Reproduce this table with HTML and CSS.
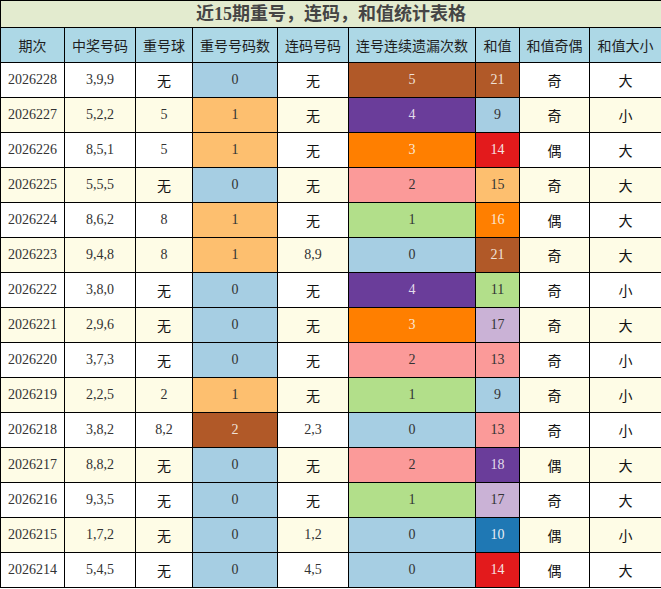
FILE: index.html
```html
<!DOCTYPE html>
<html lang="zh">
<head>
<meta charset="utf-8">
<title>近15期重号，连码，和值统计表格</title>
<link rel="stylesheet" href="styles.css">
</head>
<body>
<table class="stat">
  <colgroup>
    <col class="c1"><col class="c2"><col class="c3"><col class="c4"><col class="c5"><col class="c6"><col class="c7"><col class="c8"><col class="c9">
  </colgroup>
  <thead>
    <tr class="title-row"><th colspan="9" class="title">近15期重号，连码，和值统计表格</th></tr>
    <tr class="head-row">
      <th>期次</th><th>中奖号码</th><th>重号球</th><th>重号号码数</th><th>连码号码</th><th>连号连续遗漏次数</th><th>和值</th><th>和值奇偶</th><th>和值大小</th>
    </tr>
  </thead>
  <tbody>
    <tr><td class="n">2026228</td><td class="n">3,9,9</td><td class="z">无</td><td class="n p0">0</td><td class="z">无</td><td class="n p11">5</td><td class="n p11">21</td><td class="z">奇</td><td class="z">大</td></tr>
    <tr class="alt"><td class="n">2026227</td><td class="n">5,2,2</td><td class="n">5</td><td class="n p6">1</td><td class="z">无</td><td class="n p9">4</td><td class="n p0">9</td><td class="z">奇</td><td class="z">小</td></tr>
    <tr><td class="n">2026226</td><td class="n">8,5,1</td><td class="n">5</td><td class="n p6">1</td><td class="z">无</td><td class="n p7">3</td><td class="n p5">14</td><td class="z">偶</td><td class="z">大</td></tr>
    <tr class="alt"><td class="n">2026225</td><td class="n">5,5,5</td><td class="z">无</td><td class="n p0">0</td><td class="z">无</td><td class="n p4">2</td><td class="n p6">15</td><td class="z">奇</td><td class="z">大</td></tr>
    <tr><td class="n">2026224</td><td class="n">8,6,2</td><td class="n">8</td><td class="n p6">1</td><td class="z">无</td><td class="n p2">1</td><td class="n p7">16</td><td class="z">偶</td><td class="z">大</td></tr>
    <tr class="alt"><td class="n">2026223</td><td class="n">9,4,8</td><td class="n">8</td><td class="n p6">1</td><td class="n">8,9</td><td class="n p0">0</td><td class="n p11">21</td><td class="z">奇</td><td class="z">大</td></tr>
    <tr><td class="n">2026222</td><td class="n">3,8,0</td><td class="z">无</td><td class="n p0">0</td><td class="z">无</td><td class="n p9">4</td><td class="n p2">11</td><td class="z">奇</td><td class="z">小</td></tr>
    <tr class="alt"><td class="n">2026221</td><td class="n">2,9,6</td><td class="z">无</td><td class="n p0">0</td><td class="z">无</td><td class="n p7">3</td><td class="n p8">17</td><td class="z">奇</td><td class="z">大</td></tr>
    <tr><td class="n">2026220</td><td class="n">3,7,3</td><td class="z">无</td><td class="n p0">0</td><td class="z">无</td><td class="n p4">2</td><td class="n p4">13</td><td class="z">奇</td><td class="z">小</td></tr>
    <tr class="alt"><td class="n">2026219</td><td class="n">2,2,5</td><td class="n">2</td><td class="n p6">1</td><td class="z">无</td><td class="n p2">1</td><td class="n p0">9</td><td class="z">奇</td><td class="z">小</td></tr>
    <tr><td class="n">2026218</td><td class="n">3,8,2</td><td class="n">8,2</td><td class="n p11">2</td><td class="n">2,3</td><td class="n p0">0</td><td class="n p4">13</td><td class="z">奇</td><td class="z">小</td></tr>
    <tr class="alt"><td class="n">2026217</td><td class="n">8,8,2</td><td class="z">无</td><td class="n p0">0</td><td class="z">无</td><td class="n p4">2</td><td class="n p9">18</td><td class="z">偶</td><td class="z">大</td></tr>
    <tr><td class="n">2026216</td><td class="n">9,3,5</td><td class="z">无</td><td class="n p0">0</td><td class="z">无</td><td class="n p2">1</td><td class="n p8">17</td><td class="z">奇</td><td class="z">大</td></tr>
    <tr class="alt"><td class="n">2026215</td><td class="n">1,7,2</td><td class="z">无</td><td class="n p0">0</td><td class="n">1,2</td><td class="n p0">0</td><td class="n p1">10</td><td class="z">偶</td><td class="z">小</td></tr>
    <tr><td class="n">2026214</td><td class="n">5,4,5</td><td class="z">无</td><td class="n p0">0</td><td class="n">4,5</td><td class="n p0">0</td><td class="n p5">14</td><td class="z">偶</td><td class="z">大</td></tr>
  </tbody>
</table>
</body>
</html>
```
FILE: styles.css
```css
html, body {
  margin: 0;
  padding: 0;
  background: #ffffff;
}

.stat {
  border-collapse: collapse;
  table-layout: fixed;
  width: 661px;
  font-family: "Liberation Serif", "Noto Sans CJK SC", serif;
}

.c1 { width: 64px; }
.c2 { width: 71px; }
.c3 { width: 57px; }
.c4 { width: 85px; }
.c5 { width: 71px; }
.c6 { width: 127px; }
.c7 { width: 44px; }
.c8 { width: 70px; }
.c9 { width: 72px; }

.stat th,
.stat td {
  border: 1px solid #000;
  padding: 0;
  text-align: center;
  vertical-align: middle;
  white-space: nowrap;
  overflow: hidden;
}

.title {
  height: 26px;
  background: #e3ebcf;
  color: #454545;
  font-family: "Liberation Serif", "Noto Sans CJK SC", serif;
  font-weight: bold;
  font-size: 18px;
  line-height: 26px;
  border-bottom-width: 2px;
}

.head-row th {
  height: 34px;
  background: #add8e6;
  color: #1e1e1e;
  font-family: "Noto Sans CJK SC", sans-serif;
  font-weight: normal;
  font-size: 14px;
  line-height: 20px;
}

.stat td {
  height: 34px;
  line-height: 20px;
}

.alt td { background: #fefce6; }

.n {
  font-size: 14px;
  color: #333;
}

.z {
  font-family: "Noto Sans CJK SC", sans-serif;
  font-size: 14px;
  color: #111;
  padding-top: 3px;
}

.stat td.p0 { background: #a6cee3; }
.stat td.p1 { background: #1f78b4; color: #e8eef4; }
.stat td.p2 { background: #b2df8a; }
.stat td.p4 { background: #fb9a99; }
.stat td.p5 { background: #e31a1c; color: #f6e4e4; }
.stat td.p6 { background: #fdbf6f; }
.stat td.p7 { background: #ff7f00; color: #fbe8d6; }
.stat td.p8 { background: #cab2d6; }
.stat td.p9 { background: #6a3d9a; color: #e2dcea; }
.stat td.p11 { background: #b15928; color: #f0e2d8; }
```
